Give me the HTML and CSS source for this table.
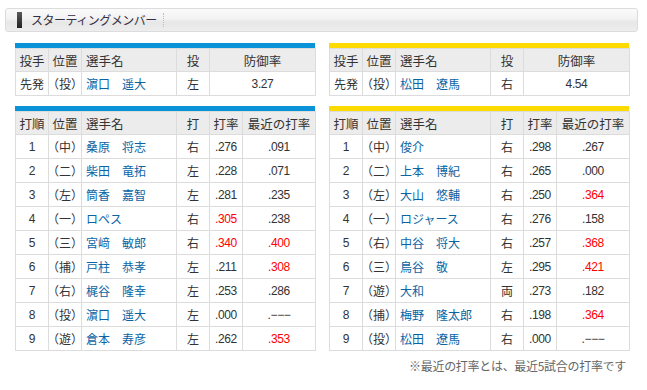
FILE: index.html
```html
<!DOCTYPE html>
<html lang="ja">
<head>
<meta charset="utf-8">
<title>スターティングメンバー</title>
<link rel="stylesheet" href="styles.css">
</head>
<body>
<div class="page">
  <div class="title">
    <span class="mark"></span>
    <span class="title-text">スターティングメンバー</span>
    <span class="sep"></span>
  </div>

  <div class="teams">
    <div class="team team-blue">
      <div class="bar"></div>
      <table class="tbl">
        <colgroup><col class="c1"><col class="c2"><col class="c3"><col class="c4"><col class="c5w"></colgroup>
        <tr><th>投手</th><th>位置</th><th class="name">選手名</th><th>投</th><th>防御率</th></tr>
        <tr><td class="jp">先発</td><td class="pos">（投）</td><td class="name"><a>濵口　遥大</a></td><td class="jp">左</td><td class="num">3.27</td></tr>
      </table>
      <div class="bar bar2"></div>
      <table class="tbl">
        <colgroup><col class="c1"><col class="c2"><col class="c3"><col class="c4"><col class="c5"><col class="c6"></colgroup>
        <tr><th>打順</th><th>位置</th><th class="name">選手名</th><th>打</th><th>打率</th><th>最近の打率</th></tr>
        <tr><td class="num">1</td><td class="pos">（中）</td><td class="name"><a>桑原　将志</a></td><td class="jp">右</td><td class="num">.276</td><td class="num">.091</td></tr>
        <tr><td class="num">2</td><td class="pos">（二）</td><td class="name"><a>柴田　竜拓</a></td><td class="jp">左</td><td class="num">.228</td><td class="num">.071</td></tr>
        <tr><td class="num">3</td><td class="pos">（左）</td><td class="name"><a>筒香　嘉智</a></td><td class="jp">左</td><td class="num">.281</td><td class="num">.235</td></tr>
        <tr><td class="num">4</td><td class="pos">（一）</td><td class="name"><a>ロペス</a></td><td class="jp">右</td><td class="num red">.305</td><td class="num">.238</td></tr>
        <tr><td class="num">5</td><td class="pos">（三）</td><td class="name"><a>宮﨑　敏郎</a></td><td class="jp">右</td><td class="num red">.340</td><td class="num red">.400</td></tr>
        <tr><td class="num">6</td><td class="pos">（捕）</td><td class="name"><a>戸柱　恭孝</a></td><td class="jp">左</td><td class="num">.211</td><td class="num red">.308</td></tr>
        <tr><td class="num">7</td><td class="pos">（右）</td><td class="name"><a>梶谷　隆幸</a></td><td class="jp">左</td><td class="num">.253</td><td class="num">.286</td></tr>
        <tr><td class="num">8</td><td class="pos">（投）</td><td class="name"><a>濵口　遥大</a></td><td class="jp">左</td><td class="num">.000</td><td class="num">.−−−</td></tr>
        <tr><td class="num">9</td><td class="pos">（遊）</td><td class="name"><a>倉本　寿彦</a></td><td class="jp">左</td><td class="num">.262</td><td class="num red">.353</td></tr>
      </table>
    </div>

    <div class="team team-yellow">
      <div class="bar"></div>
      <table class="tbl">
        <colgroup><col class="c1"><col class="c2"><col class="c3"><col class="c4"><col class="c5w"></colgroup>
        <tr><th>投手</th><th>位置</th><th class="name">選手名</th><th>投</th><th>防御率</th></tr>
        <tr><td class="jp">先発</td><td class="pos">（投）</td><td class="name"><a>松田　遼馬</a></td><td class="jp">右</td><td class="num">4.54</td></tr>
      </table>
      <div class="bar bar2"></div>
      <table class="tbl">
        <colgroup><col class="c1"><col class="c2"><col class="c3"><col class="c4"><col class="c5"><col class="c6"></colgroup>
        <tr><th>打順</th><th>位置</th><th class="name">選手名</th><th>打</th><th>打率</th><th>最近の打率</th></tr>
        <tr><td class="num">1</td><td class="pos">（中）</td><td class="name"><a>俊介</a></td><td class="jp">右</td><td class="num">.298</td><td class="num">.267</td></tr>
        <tr><td class="num">2</td><td class="pos">（二）</td><td class="name"><a>上本　博紀</a></td><td class="jp">右</td><td class="num">.265</td><td class="num">.000</td></tr>
        <tr><td class="num">3</td><td class="pos">（左）</td><td class="name"><a>大山　悠輔</a></td><td class="jp">右</td><td class="num">.250</td><td class="num red">.364</td></tr>
        <tr><td class="num">4</td><td class="pos">（一）</td><td class="name"><a>ロジャース</a></td><td class="jp">右</td><td class="num">.276</td><td class="num">.158</td></tr>
        <tr><td class="num">5</td><td class="pos">（右）</td><td class="name"><a>中谷　将大</a></td><td class="jp">右</td><td class="num">.257</td><td class="num red">.368</td></tr>
        <tr><td class="num">6</td><td class="pos">（三）</td><td class="name"><a>鳥谷　敬</a></td><td class="jp">左</td><td class="num">.295</td><td class="num red">.421</td></tr>
        <tr><td class="num">7</td><td class="pos">（遊）</td><td class="name"><a>大和</a></td><td class="jp">両</td><td class="num">.273</td><td class="num">.182</td></tr>
        <tr><td class="num">8</td><td class="pos">（捕）</td><td class="name"><a>梅野　隆太郎</a></td><td class="jp">右</td><td class="num">.198</td><td class="num red">.364</td></tr>
        <tr><td class="num">9</td><td class="pos">（投）</td><td class="name"><a>松田　遼馬</a></td><td class="jp">右</td><td class="num">.000</td><td class="num">.−−−</td></tr>
      </table>
      <p class="note">※最近の打率とは、最近5試合の打率です</p>
    </div>
  </div>
</div>
</body>
</html>
```

FILE: styles.css
```css
* { box-sizing: border-box; }
html, body { margin: 0; padding: 0; background: #fff; }
body {
  font-family: "Noto Sans CJK JP", "Liberation Sans", sans-serif;
  color: #333;
  width: 647px;
  height: 390px;
  overflow: hidden;
}
.page { padding-top: 8px; }

.title {
  margin: 0 9px 0 5px;
  height: 24px;
  border: 1px solid #dcdcdc;
  border-radius: 3px;
  background: linear-gradient(#fbfbfb 0%, #f2f2f2 45%, #e7e7e7 60%, #ededed 100%);
  display: flex;
  align-items: center;
  padding-left: 11px;
}
.mark {
  width: 5px;
  height: 16px;
  background: linear-gradient(#5a5a5a, #222);
}
.title-text {
  margin-left: 9px;
  font-size: 12px;
  letter-spacing: -0.5px;
  color: #352f45;
  line-height: 1;
}
.sep {
  margin-left: 6px;
  height: 14px;
  border-left: 1px dotted #bdbdbd;
}

.teams {
  display: flex;
  gap: 14px;
  padding-left: 15px;
  margin-top: 11px;
}
.team { width: 300px; }
.bar { height: 5px; }
.bar2 { margin-top: 10px; }
.team-blue .bar { background: #0a93d9; }
.team-yellow .bar { background: #fedb00; }

.tbl {
  width: 300px;
  border-collapse: collapse;
  table-layout: fixed;
}
.c1, .c2, .c4, .c5 { width: 33px; }
.c3 { width: 95px; }
.c6 { width: 73px; }
.c5w { width: 106px; }

.tbl th, .tbl td {
  border: 1px solid #dcdcdc;
  height: 24px;
  padding: 0;
  text-align: center;
  vertical-align: middle;
  white-space: nowrap;
  overflow: hidden;
}
.tbl th {
  background: #ececec;
  font-weight: normal;
  font-size: 12.5px;
  color: #333;
}
.tbl tr:first-child th { height: 23px; }
.tbl th.name, .tbl td.name {
  text-align: left;
  padding-left: 4px;
}
.tbl td { font-size: 12px; }
.tbl td.jp { font-size: 12px; }
.tbl td.pos { font-feature-settings: "halt"; font-size: 12px; }
.tbl td.num {
  font-family: "Liberation Sans", "Noto Sans CJK JP", sans-serif;
  font-size: 12px;
  letter-spacing: -0.4px;
}
.tbl td.name a { color: #0a64a4; text-decoration: none; }
.tbl td.red { color: #ff0000; }

.note {
  margin: 6px 3px 0 0;
  text-align: right;
  font-size: 12px;
  color: #666;
  letter-spacing: -0.3px;
  white-space: nowrap;
}
```
